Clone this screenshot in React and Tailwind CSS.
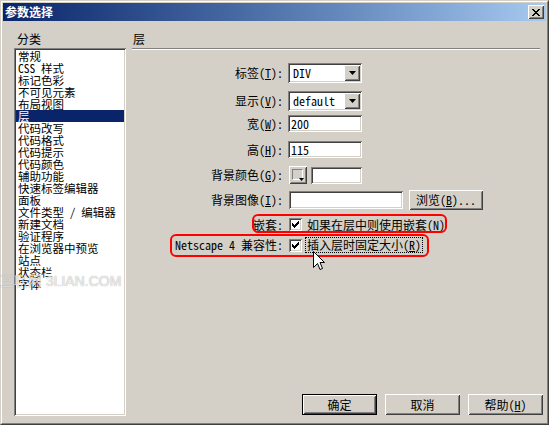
import React from "react";

const sunken = "shadow-[inset_1px_1px_0_#808080,inset_-1px_-1px_0_#ffffff,inset_2px_2px_0_#404040,inset_-2px_-2px_0_#d4d0c8]";
const raised = "shadow-[inset_1px_1px_0_#ffffff,inset_-1px_-1px_0_#404040,inset_2px_2px_0_#d4d0c8,inset_-2px_-2px_0_#808080]";

const categories = [
    "常规", "CSS 样式", "标记色彩", "不可见元素", "布局视图", "层", "代码改写", "代码格式",
    "代码提示", "代码颜色", "辅助功能", "快速标签编辑器", "面板", "文件类型 / 编辑器",
    "新建文档", "验证程序", "在浏览器中预览", "站点", "状态栏", "字体",
];

function Key({ k }) {
    return <span>(<u>{k}</u>)</span>;
}

function Select({ value }) {
    return (
        <div className={`relative w-[74px] h-[20px] bg-white ${sunken} flex items-center pl-[5px]`}>
            <span>{value}</span>
            <div className={`absolute right-[2px] top-[2px] w-[16px] h-[16px] bg-[#d4d0c8] ${raised} flex items-center justify-center`}>
                <svg width="7" height="4" viewBox="0 0 7 4"><path d="M0 0h7L3.5 4z" fill="#000" /></svg>
            </div>
        </div>
    );
}

function Input({ value, w = "w-[74px]", h = "h-[17px]" }) {
    return (
        <div className={`${w} ${h} bg-white ${sunken} flex items-center pl-[3px]`}>{value}</div>
    );
}

function Check() {
    return (
        <div className={`w-[13px] h-[13px] bg-white ${sunken} flex items-center justify-center shrink-0`}>
            <svg width="7" height="7" viewBox="0 0 7 7" shapeRendering="crispEdges">
                <path d="M6 0h1v1H6zM5 1h2v1H5zM0 2h1v1H0zM4 2h3v1H4zM0 3h2v1H0zM3 3h3v1H3zM0 4h5v1H0zM1 5h3v1H1zM2 6h1v1H2z" fill="#000" />
            </svg>
        </div>
    );
}

function Row({ label, className, children }) {
    return (
        <div className={`flex items-center ${className}`}>
            <div className="w-[151px] text-right whitespace-nowrap">{label}</div>
            <div className="ml-[5px] flex items-center">{children}</div>
        </div>
    );
}

function Button({ children, isDefault }) {
    if (isDefault) {
        return (
            <div className="w-[75px] h-[21px] border border-black">
                <div className={`w-full h-full bg-[#d4d0c8] ${raised} flex items-center justify-center`}>{children}</div>
            </div>
        );
    }
    return (
        <div className={`w-[75px] h-[21px] bg-[#d4d0c8] ${raised} flex items-center justify-center`}>{children}</div>
    );
}

export default function App() {
    return (
        <div className="relative w-[549px] h-[425px] bg-[#d4d0c8] text-black text-[12px] leading-[12px] font-['Noto_Sans_Mono_CJK_SC','Noto_Sans_CJK_SC',sans-serif] border border-t-[#d4d0c8] border-l-[#d4d0c8] border-r-[#404040] border-b-[#404040]">
            <div className="w-full h-full border border-t-white border-l-white border-r-[#808080] border-b-[#808080] p-px flex flex-col">
                {/* title bar */}
                <div className="h-[18px] shrink-0 bg-linear-to-r from-[#0a246a] to-[#a6caf0] flex items-center justify-between pl-[2px] pr-[2px]">
                    <span className="text-white font-bold">参数选择</span>
                    <div className={`w-[16px] h-[14px] bg-[#d4d0c8] ${raised} flex items-center justify-center`}>
                        <svg width="8" height="7" viewBox="0 0 8 7" shapeRendering="crispEdges">
                            <path d="M0 0h2v1H0zM6 0h2v1H6zM1 1h2v1H1zM5 1h2v1H5zM2 2h4v1H2zM3 3h2v1H3zM2 4h4v1H2zM1 5h2v1H1zM5 5h2v1H5zM0 6h2v1H0zM6 6h2v1H6z" fill="#000" />
                        </svg>
                    </div>
                </div>

                {/* body */}
                <div className="flex-1 flex pl-[11px] pr-[3px] pt-[12px] pb-[6px]">
                    <div className="w-[112px] flex flex-col">
                        <div className="pl-[3px] h-[12px] mb-[3px]">分类</div>
                        <div className={`h-[368px] bg-white ${sunken} pt-[2px] px-[2px] overflow-hidden`}>
                            {categories.map((c) => (
                                <div key={c} className={`h-[12px] pl-[2px] text-[11.5px] leading-[12px] whitespace-nowrap ${c === "层" ? "bg-[#0a246a] text-white" : ""}`}>{c}</div>
                            ))}
                        </div>
                    </div>

                    <div className="ml-[6px] flex-1 flex flex-col">
                        <div className="pl-px h-[12px] mb-[3px]">层</div>
                        <div className="w-[408px] h-[2px] border-t border-t-[#808080] border-b border-b-white" />

                        <Row className="mt-[13px] h-[20px]" label={<>标签<Key k="T" />:</>}>
                            <Select value="DIV" />
                        </Row>
                        <Row className="mt-[8px] h-[20px]" label={<>显示<Key k="V" />:</>}>
                            <Select value="default" />
                        </Row>
                        <Row className="mt-[4px] h-[17px]" label={<>宽<Key k="W" />:</>}>
                            <Input value="200" />
                        </Row>
                        <Row className="mt-[9px] h-[17px]" label={<>高<Key k="H" />:</>}>
                            <Input value="115" />
                        </Row>
                        <Row className="mt-[8px] h-[18px]" label={<>背景颜色<Key k="G" />:</>}>
                            <div className={`relative ml-px w-[18px] h-[18px] bg-[#d4d0c8] ${raised}`}>
                                <div className="absolute left-[3px] top-[3px] w-[11px] h-[11px] border border-t-[#808080] border-l-[#808080] border-r-white border-b-white" />
                                <svg className="absolute left-[10px] top-[12px]" width="5" height="3" viewBox="0 0 5 3"><path d="M0 0h5L2.5 3z" fill="#000" /></svg>
                            </div>
                            <div className="ml-[4px]"><Input value="" w="w-[51px]" /></div>
                        </Row>
                        <Row className="mt-[6px] h-[20px]" label={<>背景图像<Key k="I" />:</>}>
                            <div className="ml-px"><Input value="" w="w-[114px]" h="h-[18px]" /></div>
                            <div className={`ml-[6px] w-[74px] h-[20px] bg-[#d4d0c8] ${raised} flex items-center justify-center whitespace-nowrap`}>
                                浏览<Key k="B" />...
                            </div>
                        </Row>
                        <Row className="mt-[8px] h-[13px]" label="嵌套:">
                            <div className="ml-px flex items-center">
                                <Check />
                                <span className="ml-[5px] whitespace-nowrap">如果在层中则使用嵌套<Key k="N" /></span>
                            </div>
                        </Row>
                        <Row className="mt-[6px] h-[16px]" label="Netscape 4 兼容性:">
                            <div className="ml-px flex items-center">
                                <Check />
                                <span className="ml-[3px] h-[16px] px-[1px] flex items-center border border-dotted border-black whitespace-nowrap">插入层时固定大小<Key k="R" /></span>
                            </div>
                        </Row>

                        <div className="mt-auto mb-px flex justify-end gap-[8px]">
                            <Button isDefault>确定</Button>
                            <Button>取消</Button>
                            <Button>帮助<Key k="H" /></Button>
                        </div>
                    </div>
                </div>
            </div>

            {/* annotation boxes */}
            <div className="absolute left-[251px] top-[213px] w-[195px] h-[19px] border-2 border-[#ff0000] rounded-[6px] pointer-events-none" />
            <div className="absolute left-[169px] top-[233px] w-[259px] h-[23px] border-2 border-[#ff0000] rounded-[6px] pointer-events-none" />

            {/* watermark */}
            <div className="absolute left-[-1px] top-[273px] text-[14px] leading-[14px] font-['Liberation_Sans',sans-serif] text-[rgba(255,255,255,0.8)] [text-shadow:0_0_1px_rgba(0,0,0,0.45)] whitespace-nowrap pointer-events-none">
                三联网 3LIAN.COM
            </div>

            {/* mouse pointer */}
            <svg className="absolute left-[312px] top-[250px]" width="12" height="20" viewBox="0 0 12 20">
                <path d="M0.5 0.5V16.5L4.5 12.5L7 18.5L9.5 17.5L7 11.5H11.5Z" fill="#fff" stroke="#000" strokeWidth="1" />
            </svg>
        </div>
    );
}
